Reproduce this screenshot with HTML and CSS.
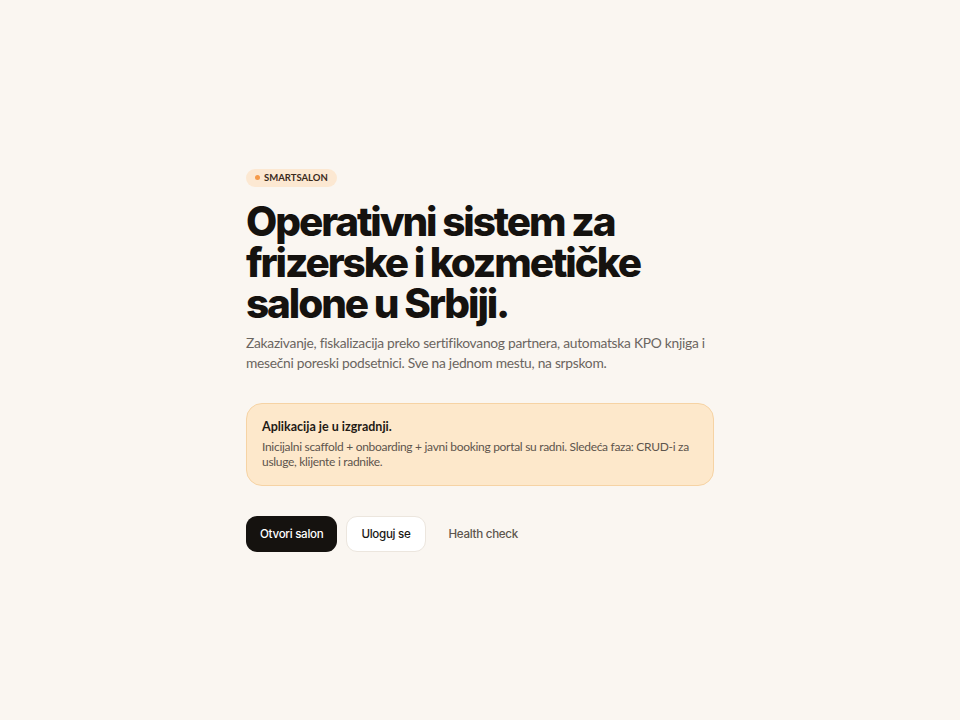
FILE: index.html
```html
<!DOCTYPE html>
<html lang="sr">
<head>
<meta charset="utf-8">
<title>SmartSalon</title>
<link rel="stylesheet" href="styles.css">
</head>
<body>
<main class="page">
  <section class="hero">
    <span class="badge"><span class="dot"></span>SMARTSALON</span>
    <h1 class="title"><span class="title-line">Operativni sistem za</span><span class="title-line">frizerske i kozmetičke</span><span class="title-line">salone u Srbiji.</span></h1>
    <p class="lead">Zakazivanje, fiskalizacija preko sertifikovanog partnera, automatska KPO knjiga i mesečni poreski podsetnici. Sve na jednom mestu, na srpskom.</p>
    <div class="notice">
      <p class="notice-title">Aplikacija je u izgradnji.</p>
      <p class="notice-text">Inicijalni scaffold + onboarding + javni booking portal su radni. Sledeća faza: CRUD&#8209;i za usluge, klijente i radnike.</p>
    </div>
    <div class="actions">
      <a class="btn btn-primary" href="#">Otvori salon</a>
      <a class="btn btn-outline" href="#">Uloguj se</a>
      <a class="btn btn-ghost" href="#">Health check</a>
    </div>
  </section>
</main>
</body>
</html>
```
FILE: styles.css
```css
* { box-sizing: border-box; }
html, body { margin: 0; padding: 0; }
body {
  background: #faf6f1;
  color: #1a1714;
  font-family: Lato, "Noto Sans", sans-serif;
}
.page {
  min-height: 720px;
  display: flex;
  align-items: center;
  justify-content: center;
}
.hero {
  width: 468px;
  display: flex;
  flex-direction: column;
  align-items: flex-start;
}
.badge {
  display: inline-flex;
  align-items: center;
  gap: 4px;
  height: 18px;
  padding: 0 9px;
  border-radius: 9px;
  background: #fce8d2;
  color: #3a2a1c;
  font-size: 9.5px;
  font-weight: 700;
  letter-spacing: 0;
}
.dot {
  width: 5px;
  height: 5px;
  border-radius: 50%;
  background: #f59a4a;
}
.title {
  margin: 14px 0 0;
  font-family: Inter, "Noto Sans", sans-serif;
  font-size: 40.5px;
  line-height: 41px;
  font-weight: 800;
  letter-spacing: -0.052em;
  color: #15120f;
}
.title-line {
  display: block;
  height: 41px;
}
.lead {
  margin: 9px 0 0;
  font-size: 13.8px;
  line-height: 20px;
  letter-spacing: -0.02em;
  color: #6b6560;
}
.notice {
  margin-top: 30px;
  width: 100%;
  padding: 15px 15px 16px;
  background: #fde8cb;
  border: 1px solid #f6d3a4;
  border-radius: 16px;
}
.notice-title {
  margin: 0;
  font-size: 12.5px;
  font-weight: 700;
  line-height: 16px;
  color: #1f1a15;
}
.notice-text {
  margin: 4px 0 0;
  font-size: 12px;
  line-height: 15px;
  letter-spacing: -0.025em;
  color: #5d554d;
}
.actions {
  margin-top: 30px;
  display: flex;
  gap: 9px;
  align-items: center;
}
.btn {
  display: inline-flex;
  align-items: center;
  height: 36px;
  padding: 0 14px;
  border-radius: 11px;
  font-family: Inter, "Noto Sans", sans-serif;
  font-size: 11.6px;
  font-weight: 500;
  text-decoration: none;
  letter-spacing: -0.025em;
}
.btn-primary {
  background: #15120f;
  color: #ffffff;
}
.btn-outline {
  background: #ffffff;
  color: #1a1714;
  border: 1px solid #ece6de;
}
.btn-ghost {
  color: #5d554d;
}
```
